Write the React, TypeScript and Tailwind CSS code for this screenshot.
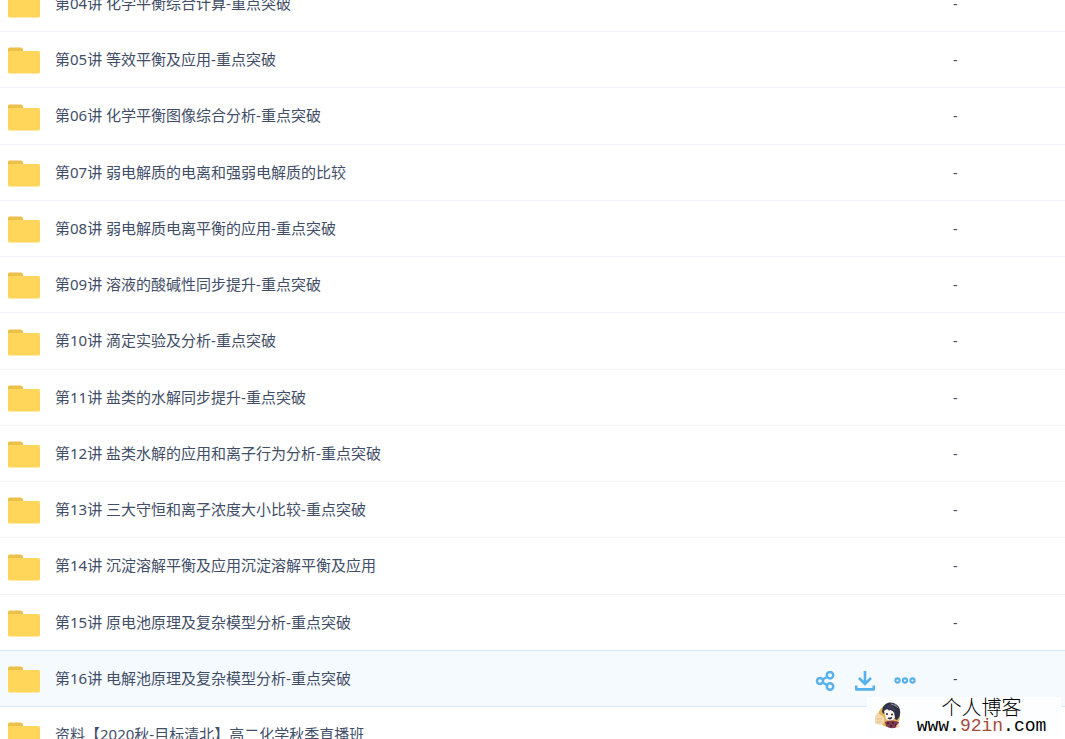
const lessons = [
    "第04讲 化学平衡综合计算-重点突破",
    "第05讲 等效平衡及应用-重点突破",
    "第06讲 化学平衡图像综合分析-重点突破",
    "第07讲 弱电解质的电离和强弱电解质的比较",
    "第08讲 弱电解质电离平衡的应用-重点突破",
    "第09讲 溶液的酸碱性同步提升-重点突破",
    "第10讲 滴定实验及分析-重点突破",
    "第11讲 盐类的水解同步提升-重点突破",
    "第12讲 盐类水解的应用和离子行为分析-重点突破",
    "第13讲 三大守恒和离子浓度大小比较-重点突破",
    "第14讲 沉淀溶解平衡及应用沉淀溶解平衡及应用",
    "第15讲 原电池原理及复杂模型分析-重点突破",
    "第16讲 电解池原理及复杂模型分析-重点突破",
    "资料【2020秋-目标清北】高二化学秋季直播班",
];

const activeIndex = 12;

function FolderIcon() {
    return (
        <svg viewBox="0 0 32 27" className="h-[27px] w-8 shrink-0" aria-hidden="true">
            <path d="M0 5V2Q0 .5 1.500 .5H13Q14.500 .5 14.800 2L15.200 5Z" fill="#ebc04b" />
            <rect y="4" width="32" height="22.500" rx="1.500" fill="#ffd65a" />
        </svg>
    );
}

function ShareIcon() {
    return (
        <svg viewBox="0 0 20 20" className="size-5" fill="none" stroke="currentColor" strokeWidth="2.500" aria-hidden="true">
            <circle cx="5" cy="10" r="3" />
            <circle cx="15" cy="4.200" r="3.200" />
            <circle cx="15" cy="15.500" r="3.200" />
            <path d="M7.500 8.500 12.200 6M7.500 11.500 12.200 14" />
        </svg>
    );
}

function DownloadIcon() {
    return (
        <svg viewBox="0 0 20 20" className="size-5" fill="none" stroke="currentColor" strokeWidth="2.600" aria-hidden="true">
            <path d="M10 0V13M4 7 10 13 16 7" />
            <path d="M1.200 14.500V18.400H18.800V14.500" strokeLinejoin="round" />
        </svg>
    );
}

function MoreIcon() {
    return (
        <svg viewBox="0 0 20 20" className="size-5 overflow-visible" fill="none" stroke="currentColor" strokeWidth="2.100" aria-hidden="true">
            <circle cx="2.500" cy="9.500" r="2.100" />
            <circle cx="10" cy="9.500" r="2.100" />
            <circle cx="17.500" cy="9.500" r="2.100" />
        </svg>
    );
}

function Avatar() {
    return (
        <svg viewBox="0 0 28 30" className="h-[30px] w-7 shrink-0" aria-hidden="true">
            <circle cx="15" cy="15" r="11" fill="#dfb455" />
            <path d="M8 11Q8 3 15 1.500Q24 1 26 9Q27 15 23 19L19 17 19 11 14 9 10 13Z" fill="#2f3044" />
            <path d="M10 10Q13 6 20 11L21 17Q17 22 12 18Z" fill="#fdf6f0" />
            <path d="M9 10 12 5 15 10 17 7 20 12 21 7 15 3Z" fill="#3a3c55" />
            <path d="M17 3 22 5M20 2 24 7" stroke="#8d90a8" strokeWidth="1" />
            <path d="M1 16Q3 10 5 13L9 15Q12 19 9 23Q4 25 1 22Z" fill="#f3d9b0" />
            <path d="M3 18H8M3 21H8" stroke="#dcb988" strokeWidth=".8" />
            <path d="M12 13H14M17 13.500H19M14 17Q16 18.500 18 16.500" stroke="#33283a" strokeWidth="1.500" />
            <path d="M11 21Q17 18 25 21L23 26Q17 29 12 25Z" fill="#84384c" />
            <path d="M13 22H15M18 22H20M16 25H18M21 24H23" stroke="#2c2133" strokeWidth="1.500" />
            <circle cx="24" cy="25" r="1.800" fill="#f3d9b0" />
        </svg>
    );
}

function RowActions() {
    return (
        <div className="flex gap-5 pt-1 text-[#57b1eb]">
            <button type="button" aria-label="分享">
                <ShareIcon />
            </button>
            <button type="button" aria-label="下载">
                <DownloadIcon />
            </button>
            <button type="button" aria-label="更多">
                <MoreIcon />
            </button>
        </div>
    );
}

export default function App() {
    return (
        <main className="relative h-screen overflow-hidden bg-white font-['Noto_Sans','Noto_Sans_CJK_SC',sans-serif] text-[#424e67]">
            <table className="-mt-6 w-full table-fixed border-separate border-spacing-0 text-left text-[15px] leading-5">
                <tbody>
                    {lessons.map((name, i) => {
                        const active = i === activeIndex;
                        const line = active || i === activeIndex - 1 ? "border-[#d9eafb]" : "border-[#f1f3f8]";
                        return (
                            <tr key={name} className={`h-14 nth-[4n+3]:h-[57px] ${active ? "bg-[#f5faff]" : ""}`}>
                                <td className={`border-b p-0 pl-2 ${line}`}>
                                    <div className="flex items-center gap-[15px] pt-0.5">
                                        <FolderIcon />
                                        <a href="#" className="truncate pb-1">
                                            {name}
                                        </a>
                                    </div>
                                </td>
                                <td className={`w-[137px] border-b p-0 ${line}`}>{active && <RowActions />}</td>
                                <td className={`w-[113px] border-b p-0 pl-px text-sm ${line}`}>
                                    {i < lessons.length - 1 && "-"}
                                </td>
                            </tr>
                        );
                    })}
                </tbody>
            </table>

            {/* 站点水印 */}
            <div className="absolute right-1 bottom-1 flex h-[38px] w-[194px] items-center bg-[#fdfeff] pl-[7px]">
                <Avatar />
                <div className="flex flex-1 flex-col items-center text-black">
                    <span className="text-[20px] leading-5 font-light">个人博客</span>
                    <span className="font-['Liberation_Mono',monospace] text-[18px] leading-4">
                        www.<span className="text-[#a34c3c]">92in</span>.com
                    </span>
                </div>
            </div>
        </main>
    );
}
